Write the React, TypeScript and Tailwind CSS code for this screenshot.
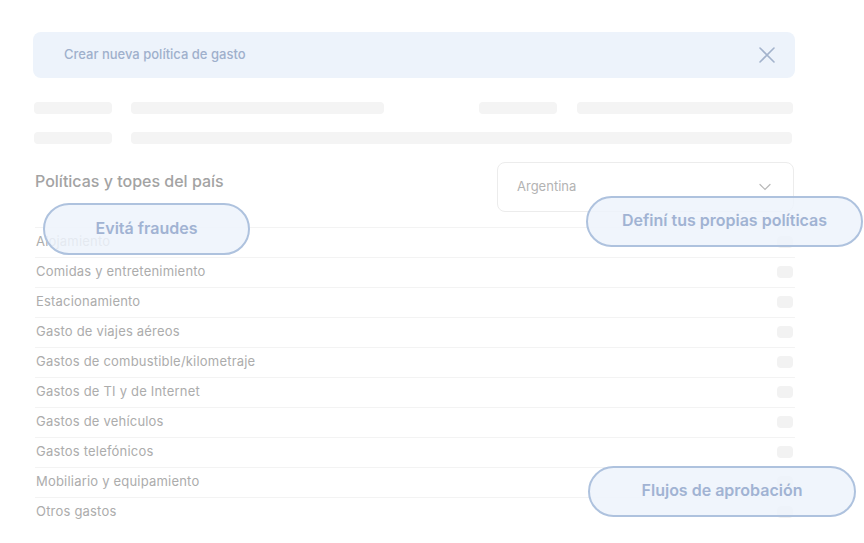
import React from "react";

const rows = [
  "Alojamiento",
  "Comidas y entretenimiento",
  "Estacionamiento",
  "Gasto de viajes aéreos",
  "Gastos de combustible/kilometraje",
  "Gastos de TI y de Internet",
  "Gastos de vehículos",
  "Gastos telefónicos",
  "Mobiliario y equipamiento",
  "Otros gastos",
];

export default function App() {
  return (
    <div className="relative w-[864px] h-[543px] overflow-hidden bg-white font-['Inter',sans-serif]">
      <div className="pt-8 pl-[33px] w-[795px]">
        <div className="h-[46px] rounded-lg bg-[#edf3fb] flex items-center justify-between pl-[31px] pr-[19px]">
          <span className="text-[13px] text-[#9fb0cc] font-medium">Crear nueva política de gasto</span>
          <svg width="18" height="18" viewBox="0 0 18 18" fill="none" stroke="#a3b3cc" strokeWidth="1.6" strokeLinecap="round">
            <path d="M2 2 L16 16 M16 2 L2 16" />
          </svg>
        </div>

        <div className="mt-6 pl-px flex gap-[19px]">
          <div className="h-3 w-[78px] rounded-sm bg-[#f4f4f4]" />
          <div className="h-3 w-[253px] rounded-sm bg-[#f4f4f4]" />
          <div className="h-3 w-[78px] ml-[76px] rounded-sm bg-[#f4f4f4]" />
          <div className="h-3 w-[216px] ml-px rounded-sm bg-[#f4f4f4]" />
        </div>
        <div className="mt-[18px] pl-px flex gap-[19px]">
          <div className="h-3 w-[78px] rounded-sm bg-[#f4f4f4]" />
          <div className="h-3 w-[661px] rounded-sm bg-[#f4f4f4]" />
        </div>

        <div className="mt-[18px] flex justify-between items-start pr-px">
          <div className="pl-[2px] pt-[7px] text-[16px] font-medium text-[#a3a3a3]">Políticas y topes del país</div>
          <div className="w-[297px] h-[50px] rounded-lg border border-[#ececec] flex items-center justify-between pl-[19px] pr-[22px]">
            <span className="text-[13px] text-[#b3b3b3]">Argentina</span>
            <svg width="12" height="8" viewBox="0 0 12 8" fill="none" stroke="#b8b8b8" strokeWidth="1.2" strokeLinecap="round">
              <path d="M1 1.5 L6 6.5 L11 1.5" />
            </svg>
          </div>
        </div>

        <div className="mt-[15px] pl-[2px]">
          {rows.map((r) => (
            <div key={r} className="h-[30px] border-t border-[#f3f3f3] flex items-center justify-between pr-[2px] pb-[2px]">
              <span className="pl-px text-[13px] tracking-[0.2px] text-[#acacac]">{r}</span>
              <div className="w-4 h-3 rounded-sm bg-[#f2f2f2]" />
            </div>
          ))}
        </div>
      </div>

      <div className="absolute left-[43px] top-[203px] w-[207px] h-[52px] rounded-full border-2 border-[#aec2de] bg-[#edf3fc]/85 flex items-center justify-center pb-[2px]">
        <span className="text-[16px] font-semibold text-[#a1b3d3]">Evitá fraudes</span>
      </div>
      <div className="absolute left-[586px] top-[196px] w-[277px] h-[51px] rounded-full border-2 border-[#aec2de] bg-[#edf3fc]/85 flex items-center justify-center pb-[3px]">
        <span className="text-[16px] font-semibold text-[#a1b3d3]">Definí tus propias políticas</span>
      </div>
      <div className="absolute left-[588px] top-[466px] w-[268px] h-[51px] rounded-full border-2 border-[#aec2de] bg-[#edf3fc]/85 flex items-center justify-center pb-[3px]">
        <span className="text-[16px] font-semibold text-[#a1b3d3]">Flujos de aprobación</span>
      </div>
    </div>
  );
}
